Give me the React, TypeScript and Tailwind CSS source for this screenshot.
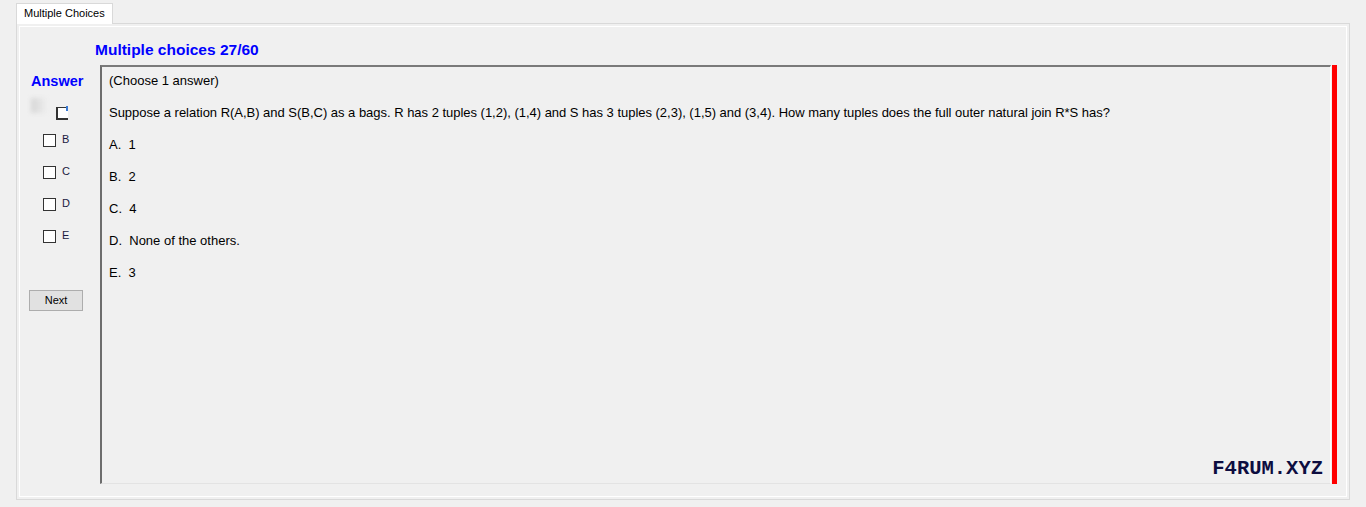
import React from "react";

const options = [
  { key: "A", text: "1" },
  { key: "B", text: "2" },
  { key: "C", text: "4" },
  { key: "D", text: "None of the others." },
  { key: "E", text: "3" },
];

function CheckRow({ label }: { label: string }) {
  return (
    <div className="flex h-[32px] items-start">
      <span className="mt-[1px] ml-[23px] h-[13px] w-[13px] border border-[#333333] bg-white" />
      <span className="ml-[6px] text-[11px] leading-[13px] text-[#1a1a40]">{label}</span>
    </div>
  );
}

export default function App() {
  return (
    <div
      className="h-[507px] w-[1366px] overflow-hidden bg-[#f0f0f0] text-black"
      style={{ fontFamily: '"Liberation Sans", Arial, sans-serif' }}
    >
      {/* tab strip */}
      <div className="flex h-[23px] items-end pl-[16px]">
        <div className="relative z-10 -mb-px flex h-[21px] items-center border border-b-0 border-[#d9d9d9] bg-white px-[7px] pb-[2px] text-[11px]">
          Multiple Choices
        </div>
      </div>

      {/* tab page */}
      <div className="ml-[16px] h-[477px] w-[1334px] border border-[#d9d9d9] p-[2px]">
        <div className="h-full w-full border border-white bg-[#f0f0f0]">
          <div className="pl-[75px] pt-[14px] text-[15.5px] font-bold leading-[18px] text-[#0000ff]">
            Multiple choices 27/60
          </div>

          <div className="mt-[6px] flex">
            {/* answer column */}
            <div className="w-[80px] shrink-0">
              <div className="pl-[11px] pt-[8px] text-[14.5px] font-bold leading-[16px] text-[#0000ff]">Answer</div>

              <div className="relative mt-[12px] h-[32px]">
                <span className="absolute left-[11px] top-[-3px] h-[15px] w-[15px] bg-gradient-to-r from-[#d6d6d6] to-[#ececec] blur-[2px]" />
                <span className="absolute left-[36px] top-[6px] h-[13px] w-[12px] border-b-2 border-l-2 border-t border-[#333333] bg-white" />
                <span className="absolute left-[46px] top-[5px] h-[5px] w-[2px] bg-[#3a7bd5]" />
              </div>
              {["B", "C", "D", "E"].map((l) => (
                <CheckRow key={l} label={l} />
              ))}

              <button className="ml-[9px] mt-[29px] flex h-[21px] w-[54px] items-center justify-center border border-[#adadad] bg-[#e1e1e1] text-[11px]">
                Next
              </button>
            </div>

            {/* question box */}
            <div className="flex h-[419px]">
              <div className="relative w-[1231px] border-l-2 border-t-2 border-b border-r border-l-[#6d6d6d] border-t-[#7a7a7a] border-b-[#e3e3e3] border-r-white pl-[7px] pt-[6px] text-[13px] leading-[16px]">
                <div>(Choose 1 answer)</div>
                <div className="mt-[16px] tracking-[-0.02px]">
                  Suppose a relation R(A,B) and S(B,C) as a bags. R has 2 tuples (1,2), (1,4) and S has 3 tuples (2,3), (1,5) and
                  (3,4). How many tuples does the full outer natural join R*S has?
                </div>
                {options.map((o) => (
                  <div key={o.key} className="mt-[16px] whitespace-pre">
                    {o.key}.{"  "}
                    {o.text}
                  </div>
                ))}
                <div
                  className="absolute bottom-[3px] right-[7px] text-[20.5px] font-bold leading-[22px] text-[#0d0d40]"
                  style={{ fontFamily: '"Liberation Mono", "DejaVu Sans Mono", monospace' }}
                >
                  F4RUM.XYZ
                </div>
              </div>
              <div className="ml-px w-[5px] bg-[#ff0000]" />
            </div>
          </div>
        </div>
      </div>
    </div>
  );
}
